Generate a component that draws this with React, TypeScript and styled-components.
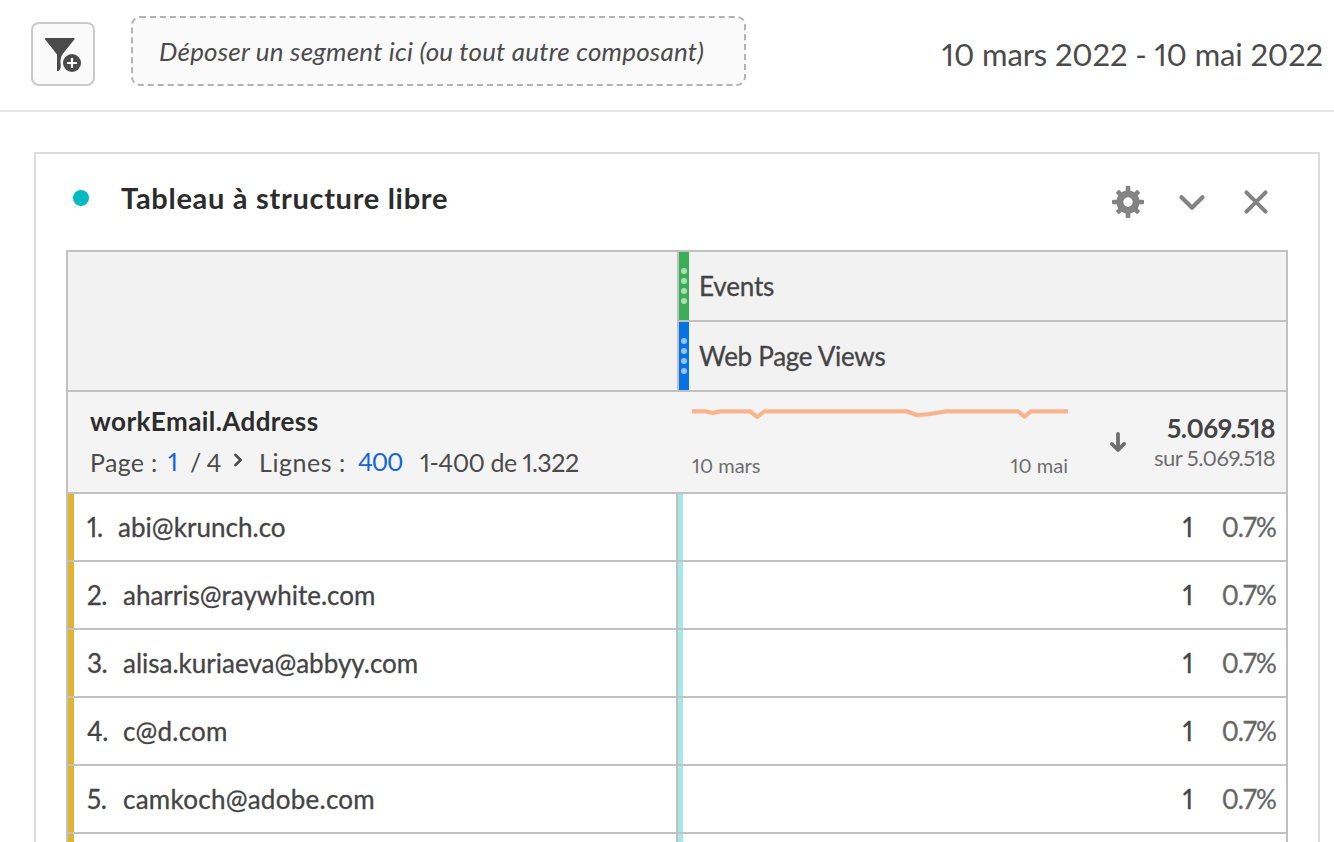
import React from "react";
import styled, { createGlobalStyle } from "styled-components";

const line = "#c1c1c1";

const GlobalStyle = createGlobalStyle`
  *, *::before, *::after { box-sizing: border-box; }
  html, body { margin: 0; padding: 0; }
  body {
    height: 842px;
    overflow: hidden;
    background: #fff;
    color: #444;
    font-family: Lato, "Open Sans", "Liberation Sans", sans-serif;
    font-size: 26px;
    font-feature-settings: "pnum" 1;
  }
`;

const Page = styled.div`
  width: 1334px;
  height: 842px;
  overflow: hidden;
`;

const Toolbar = styled.header`
  display: flex;
  align-items: flex-start;
  height: 112px;
  padding: 16px 11px 0 31px;
  border-bottom: 2px solid #e6e6e6;
`;

const FilterButton = styled.button`
  display: flex;
  width: 64px;
  height: 64px;
  margin: 6px 36px 0 0;
  padding: 0;
  border: 2px solid #cacaca;
  border-radius: 8px;
  background: #fafafa;
`;

const DropZone = styled.div`
  width: 615px;
  height: 70px;
  padding-left: 26px;
  border: 2px dashed #b3b3b3;
  border-radius: 9px;
  background: #fafafa;
  color: #4b4b4b;
  font-style: italic;
  line-height: 66px;
  letter-spacing: 0.19px;
  white-space: nowrap;
`;

const DateRange = styled.div`
  margin-left: auto;
  font-size: 31px;
  line-height: 77px;
  letter-spacing: -0.13px;
  color: #4b4b4b;
  white-space: nowrap;
`;

const Panel = styled.section`
  width: 1286px;
  height: 760px;
  margin: 40px 0 0 34px;
  padding: 0 30px;
  border: 2px solid #dcdcdc;
`;

const PanelHeader = styled.div`
  display: flex;
  align-items: center;
  height: 96px;
  padding: 0 16px 8px 7px;
`;

const StatusDot = styled.span`
  width: 16px;
  height: 16px;
  margin-right: 32px;
  border-radius: 50%;
  background: #00bac2;
`;

const PanelTitle = styled.h2`
  flex: 1;
  margin: 0;
  color: #2c2c2c;
  font-size: 29px;
  font-weight: 700;
  line-height: 36px;
  letter-spacing: 0.7px;
`;

const Actions = styled.div`
  display: flex;
  gap: 32px;
  padding-top: 8px;
`;

const Table = styled.div`
  width: 1222px;
  border: 2px solid ${line};
`;

const MetricHead = styled.div`
  display: grid;
  grid-template-columns: 609px 1fr;
  height: 140px;
  border-bottom: 2px solid ${line};
  background: #f2f2f2;
`;

const MetricList = styled.div`
  display: flex;
  flex-direction: column;
  border-left: 2px solid ${line};
`;

const Metric = styled.div`
  display: flex;
  align-items: center;
  height: 68px;
  & + & { margin-top: 2px; box-shadow: 0 -2px 0 ${line}; }
`;

const Grip = styled.div<{ $color: string }>`
  display: flex;
  flex-direction: column;
  align-items: center;
  justify-content: center;
  gap: 4px;
  width: 10px;
  height: 68px;
  margin-right: 10px;
  background: ${(p) => p.$color};
`;

const GripDot = styled.i`
  width: 6px;
  height: 6px;
  border-radius: 50%;
  background: rgba(255, 255, 255, 0.58);
`;

const MetricName = styled.span<{ $spacing: number }>`
  letter-spacing: ${(p) => p.$spacing}px;
  line-height: 32px;
  -webkit-text-stroke: 0.3px;
`;

const Summary = styled.div`
  display: grid;
  grid-template-columns: 624px 376px 1fr;
  height: 102px;
  border-bottom: 2px solid ${line};
  background: #f4f4f4;
`;

const Dimension = styled.div`
  padding: 11px 0 0 22px;
`;

const DimensionName = styled.div`
  color: #2c2c2c;
  font-weight: 700;
  line-height: 36px;
  letter-spacing: 0.42px;
`;

const Pager = styled.div`
  display: flex;
  align-items: center;
  height: 46px;
  color: #4b4b4b;
  font-size: 25px;
  line-height: 44px;
`;

const PagerText = styled.span<{ $width: number; $spacing?: number }>`
  width: ${(p) => p.$width}px;
  letter-spacing: ${(p) => p.$spacing ?? 0}px;
  white-space: nowrap;
`;

const PagerLink = styled(PagerText)`
  padding-bottom: 2px;
  line-height: 42px;
  color: #1265d8;
`;

const Trend = styled.div`
  display: flex;
  flex-direction: column;
`;

const TrendLabels = styled.div`
  display: flex;
  justify-content: space-between;
  margin-top: 19px;
  color: #6e6e6e;
  font-size: 20px;
  line-height: 26px;
`;

const Totals = styled.div`
  display: flex;
  padding-right: 11px;
`;

const TotalValues = styled.div`
  margin-left: auto;
  padding-top: 18px;
  text-align: right;
  white-space: nowrap;
`;

const Total = styled.div`
  font-weight: 700;
  line-height: 36px;
  letter-spacing: -0.45px;
`;

const TotalOf = styled.div`
  margin-top: -2px;
  color: #6e6e6e;
  font-size: 22px;
  line-height: 28px;
  letter-spacing: -0.55px;
`;

const Row = styled.div`
  display: grid;
  grid-template-columns: 608px 1fr;
  height: 68px;
  border-bottom: 2px solid ${line};
  line-height: 32px;
  -webkit-text-stroke: 0.3px;
`;

const NameCell = styled.div`
  display: flex;
  align-items: center;
  padding-left: 13px;
  border-left: 6px solid #dfb42e;
  white-space: nowrap;
`;

const Rank = styled.span<{ $width: number }>`
  width: ${(p) => p.$width}px;
  letter-spacing: -0.4px;
`;

const Label = styled.span<{ $spacing: number }>`
  letter-spacing: ${(p) => p.$spacing}px;
`;

const ValueCell = styled.div`
  display: flex;
  align-items: center;
  justify-content: flex-end;
  padding-right: 11px;
  border-left: 2px solid ${line};
  box-shadow: inset 5px 0 0 #a4e9e9;
`;

const Percent = styled.span`
  width: 66px;
  margin: 0 -1px 0 17px;
  color: #666;
  text-align: right;
  letter-spacing: -0.8px;
`;

const metrics = [
  { name: "Events", color: "#3bae55", spacing: -0.15 },
  { name: "Web Page Views", color: "#0473e4", spacing: -0.28 },
];

const rows = [
  { label: "abi@krunch.co", indent: 31, spacing: 0.04 },
  { label: "aharris@raywhite.com", indent: 36, spacing: 0 },
  { label: "alisa.kuriaeva@abbyy.com", indent: 36, spacing: 0 },
  { label: "c@d.com", indent: 36, spacing: 0.2 },
  { label: "camkoch@adobe.com", indent: 36, spacing: 0.26 },
  { label: "", indent: 36, spacing: 0 },
];

const FilterAddIcon = () => (
  <svg width="60" height="60" viewBox="33 24 60 60">
    <path d="M45 38h29.500v1.200L63.500 53c-2.300 2.500-3.300 6-3 9.500c.1 2 .5 3.600 0 6L58.600 71H57V54.500L45 39.200z" fill="#4b4b4b" />
    <circle cx="72" cy="63" r="10.500" fill="#fafafa" />
    <circle cx="72" cy="63" r="9" fill="#4b4b4b" />
    <path d="M72 58v10M67 63h10" stroke="#fff" strokeWidth="2.200" />
  </svg>
);

const GearIcon = () => (
  <svg width="32" height="32" viewBox="-16 -16 32 32" fill="#838383">
    {[0, 45, 90, 135].map((a) => (
      <rect key={a} x="-2.300" y={a % 90 ? -15.2 : -16} width="4.600" height={a % 90 ? 30.4 : 32} rx="1" transform={`rotate(${a})`} />
    ))}
    <circle r="11.600" />
    <circle r="4.700" fill="#fff" />
  </svg>
);

const ChevronDownIcon = () => (
  <svg width="32" height="32" viewBox="0 0 32 32" fill="none" stroke="#838383" strokeWidth="4.200" strokeLinecap="round" strokeLinejoin="round">
    <path d="M5.500 11.300L16 21.800L26.500 11.300" />
  </svg>
);

const CloseIcon = () => (
  <svg width="32" height="32" viewBox="0 0 32 32" fill="none" stroke="#838383" strokeWidth="4" strokeLinecap="round">
    <path d="M6.400 6.400L25.600 25.600M25.600 6.400L6.400 25.600" />
  </svg>
);

const NextIcon = () => (
  <svg width="26" height="26" viewBox="0 0 26 26" fill="none" stroke="#4b4b4b" strokeWidth="2.600" strokeLinecap="round" strokeLinejoin="round">
    <path d="M2.500 6l5.200 5-5.200 5" />
  </svg>
);

const SortIcon = styled.svg`
  margin-left: 40px;
`;

const SortArrow = () => (
  <SortIcon width="20" height="100" viewBox="1108 392 20 100" fill="none" stroke="#6e6e6e" strokeWidth="3.800" strokeLinecap="round" strokeLinejoin="round">
    <path d="M1118 434v16M1111.900 443.900l6.100 6.100l6.100-6.100" />
  </SortIcon>
);

const Sparkline = () => (
  <svg width="376" height="41" viewBox="692 392 376 41" fill="none" stroke="#f7b48f" strokeWidth="4.200">
    <path d="M692 411.400H706L713 413L720 411.400H750L757 416.900L764.500 411.400H907L917 415L930 414L946 411.400H1018L1024.500 416.600L1031 411.400H1068" />
  </svg>
);

export default function App() {
  return (
    <Page>
      <GlobalStyle />
      <Toolbar>
        <FilterButton aria-label="Ajouter un filtre"><FilterAddIcon /></FilterButton>
        <DropZone>Déposer un segment ici (ou tout autre composant)</DropZone>
        <DateRange>10 mars 2022 - 10 mai 2022</DateRange>
      </Toolbar>
      <Panel>
        <PanelHeader>
          <StatusDot />
          <PanelTitle>Tableau à structure libre</PanelTitle>
          <Actions>
            <GearIcon />
            <ChevronDownIcon />
            <CloseIcon />
          </Actions>
        </PanelHeader>
        <Table>
          <MetricHead>
            <div />
            <MetricList>
              {metrics.map((m) => (
                <Metric key={m.name}>
                  <Grip $color={m.color}><GripDot /><GripDot /><GripDot /><GripDot /></Grip>
                  <MetricName $spacing={m.spacing}>{m.name}</MetricName>
                </Metric>
              ))}
            </MetricList>
          </MetricHead>
          <Summary>
            <Dimension>
              <DimensionName>workEmail.Address</DimensionName>
              <Pager>
                <PagerText $width={78} $spacing={0.3}>Page :</PagerText>
                <PagerLink $width={22}>1</PagerLink>
                <PagerText $width={43} $spacing={-0.6}>/ 4</PagerText>
                <NextIcon />
                <PagerText $width={99} $spacing={0.55}>Lignes :</PagerText>
                <PagerLink $width={62} $spacing={-1.2}>400</PagerLink>
                <PagerText $width={170} $spacing={-0.5}>1-400 de 1.322</PagerText>
              </Pager>
            </Dimension>
            <Trend>
              <Sparkline />
              <TrendLabels><span>10 mars</span><span>10 mai</span></TrendLabels>
            </Trend>
            <Totals>
              <SortArrow />
              <TotalValues>
                <Total>5.069.518</Total>
                <TotalOf>sur 5.069.518</TotalOf>
              </TotalValues>
            </Totals>
          </Summary>
          {rows.map((r, i) => (
            <Row key={i}>
              <NameCell>
                {r.label && (
                  <>
                    <Rank $width={r.indent}>{i + 1}.</Rank>
                    <Label $spacing={r.spacing}>{r.label}</Label>
                  </>
                )}
              </NameCell>
              <ValueCell>
                {r.label && (
                  <>
                    <span>1</span>
                    <Percent>0.7%</Percent>
                  </>
                )}
              </ValueCell>
            </Row>
          ))}
        </Table>
      </Panel>
    </Page>
  );
}
